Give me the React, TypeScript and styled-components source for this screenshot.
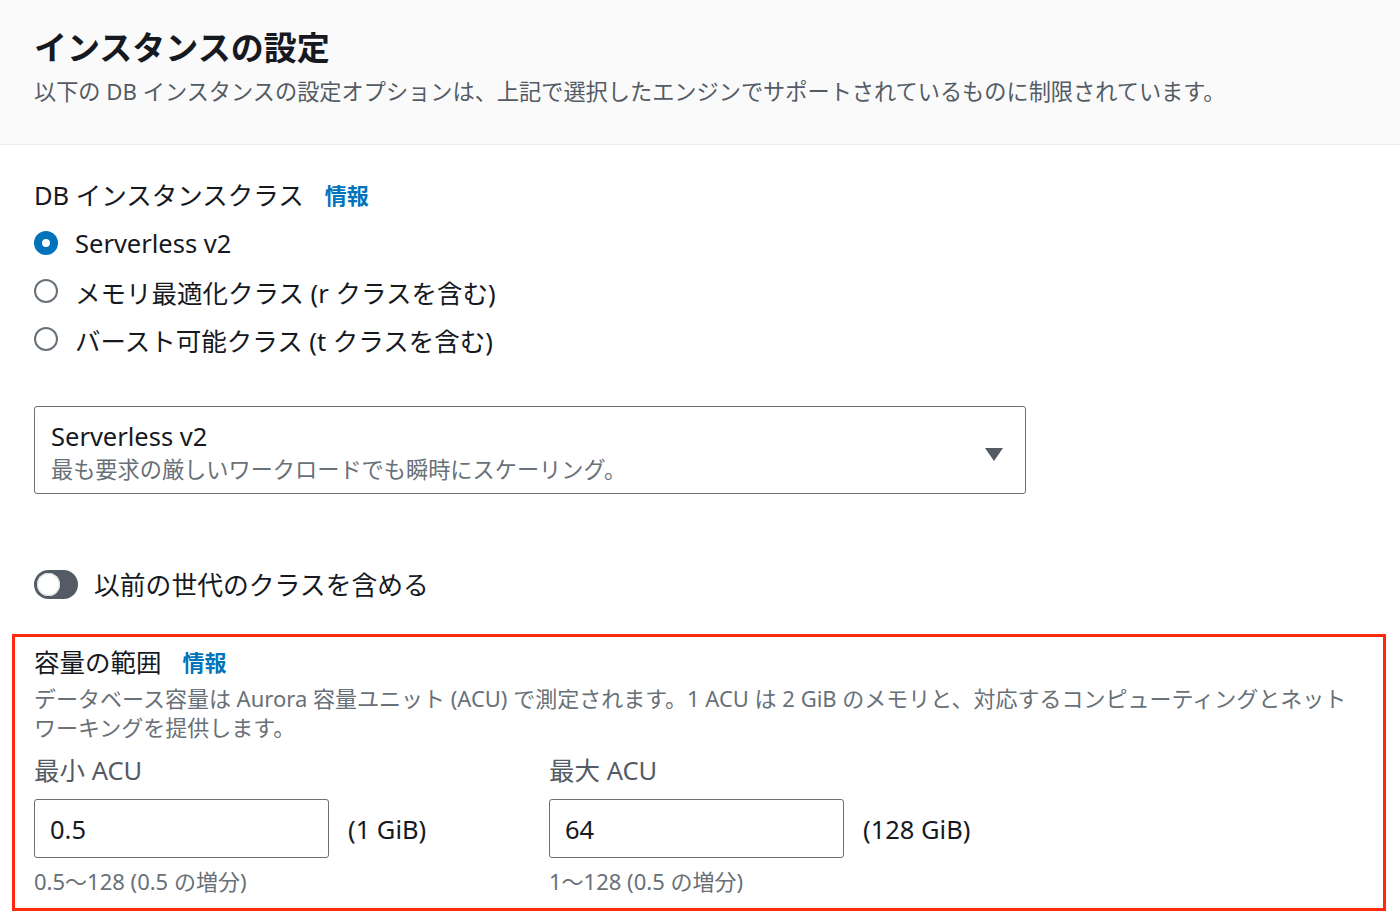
import React from 'react'
import styled, { createGlobalStyle } from 'styled-components'

const GlobalStyle = createGlobalStyle`
  body {
    margin: 0;
    background: #ffffff;
    color: #16191f;
    font-family: "Noto Sans", "Noto Sans CJK JP", sans-serif;
  }
`

const Page = styled.div`
  width: 1400px;
  min-height: 920px;
  background: #ffffff;
`

const Header = styled.header`
  background: #fafafa;
  border-bottom: 1px solid #eaeded;
  padding: 28px 34px 36px;
`

const Title = styled.h2`
  margin: 0;
  font-size: 33px;
  line-height: 40px;
  font-weight: 700;
  color: #16191f;
`

const Subtitle = styled.p`
  margin: 8px 0 0;
  font-size: 22.2px;
  line-height: 32px;
  color: #545b64;
`

const Body = styled.div`
  padding: 34px 0 0;
`

const Field = styled.div`
  padding: 0 34px;
`

const Label = styled.div<{ muted?: boolean }>`
  display: flex;
  align-items: center;
  gap: 21px;
  font-size: 25.5px;
  line-height: 32px;
  color: ${({ muted }) => (muted ? '#545b64' : '#16191f')};
`

const InfoLink = styled.a`
  color: #0073bb;
  font-weight: 700;
  font-size: 22px;
  text-decoration: none;
`

const RadioGroup = styled.div`
  margin-top: 8px;
  display: flex;
  flex-direction: column;
`

const RadioRow = styled.label`
  display: flex;
  align-items: center;
  gap: 17px;
  height: 48px;
  font-size: 25.5px;
  color: #16191f;
`

const RadioDot = styled.span<{ checked?: boolean }>`
  box-sizing: border-box;
  width: 24px;
  height: 24px;
  border-radius: 50%;
  border: ${({ checked }) => (checked ? '8px solid #0073bb' : '2px solid #687078')};
  background: #ffffff;
  flex-shrink: 0;
`

const Select = styled.div`
  margin-top: 43px;
  width: 992px;
  box-sizing: border-box;
  border: 1.5px solid #687078;
  border-radius: 3px;
  padding: 13px 22px 5px 16px;
  display: flex;
  align-items: center;
  justify-content: space-between;
`

const SelectText = styled.div`
  display: flex;
  flex-direction: column;
`

const SelectValue = styled.span`
  font-size: 25.5px;
  line-height: 32px;
  color: #16191f;
`

const SelectDesc = styled.span`
  font-size: 22.2px;
  line-height: 36px;
  color: #687078;
`

const Caret = styled.span`
  width: 0;
  height: 0;
  border-left: 9px solid transparent;
  border-right: 9px solid transparent;
  border-top: 13px solid #545b64;
`

const ToggleRow = styled.label`
  margin-top: 74px;
  display: flex;
  align-items: center;
  gap: 16px;
  height: 32px;
  font-size: 25.8px;
  color: #16191f;
`

const Track = styled.span`
  box-sizing: border-box;
  width: 44px;
  height: 29px;
  border-radius: 15px;
  background: #545b64;
  padding: 3px;
  display: flex;
  align-items: center;
`

const Knob = styled.span`
  width: 23px;
  height: 23px;
  border-radius: 50%;
  background: #ffffff;
  box-shadow: inset 0 0 0 1px #d5dbdb;
`

const Highlight = styled.section`
  margin: 34px 14px 0 12px;
  border: 3px solid #ff2a0c;
  padding: 9px 19px 13px;
`

const Description = styled.p`
  margin: 6px 0 0;
  font-size: 22px;
  line-height: 29px;
  color: #687078;
`

const Columns = styled.div`
  margin-top: 12px;
  display: grid;
  grid-template-columns: 515px 515px;
`

const Column = styled.div`
  display: flex;
  flex-direction: column;
`

const InputRow = styled.div`
  margin-top: 13px;
  display: flex;
  align-items: center;
  gap: 19px;
`

const Input = styled.div`
  box-sizing: border-box;
  width: 295px;
  height: 59px;
  border: 1.5px solid #687078;
  border-radius: 3px;
  padding: 0 15px;
  display: flex;
  align-items: center;
  font-size: 25.5px;
  color: #16191f;
`

const Suffix = styled.span`
  font-size: 25.5px;
  color: #16191f;
`

const Hint = styled.div`
  margin-top: 9px;
  font-size: 22px;
  line-height: 28px;
  color: #687078;
`

const classes = [
  { label: 'Serverless v2', checked: true },
  { label: 'メモリ最適化クラス (r クラスを含む)', checked: false },
  { label: 'バースト可能クラス (t クラスを含む)', checked: false }
]

const acu = [
  { label: '最小 ACU', value: '0.5', size: '(1 GiB)', hint: '0.5〜128 (0.5 の増分)' },
  { label: '最大 ACU', value: '64', size: '(128 GiB)', hint: '1〜128 (0.5 の増分)' }
]

export default function App() {
  return (
    <Page>
      <GlobalStyle />
      <Header>
        <Title>インスタンスの設定</Title>
        <Subtitle>
          以下の DB インスタンスの設定オプションは、上記で選択したエンジンでサポートされているものに制限されています。
        </Subtitle>
      </Header>
      <Body>
        <Field>
          <Label>
            DB インスタンスクラス
            <InfoLink>情報</InfoLink>
          </Label>
          <RadioGroup>
            {classes.map((c) => (
              <RadioRow key={c.label}>
                <RadioDot checked={c.checked} />
                {c.label}
              </RadioRow>
            ))}
          </RadioGroup>
          <Select>
            <SelectText>
              <SelectValue>Serverless v2</SelectValue>
              <SelectDesc>最も要求の厳しいワークロードでも瞬時にスケーリング。</SelectDesc>
            </SelectText>
            <Caret />
          </Select>
          <ToggleRow>
            <Track>
              <Knob />
            </Track>
            以前の世代のクラスを含める
          </ToggleRow>
        </Field>
        <Highlight>
          <Label>
            容量の範囲
            <InfoLink>情報</InfoLink>
          </Label>
          <Description>
            データベース容量は Aurora 容量ユニット (ACU) で測定されます。1 ACU は 2 GiB のメモリと、対応するコンピューティングとネットワーキングを提供します。
          </Description>
          <Columns>
            {acu.map((a) => (
              <Column key={a.label}>
                <Label muted>{a.label}</Label>
                <InputRow>
                  <Input>{a.value}</Input>
                  <Suffix>{a.size}</Suffix>
                </InputRow>
                <Hint>{a.hint}</Hint>
              </Column>
            ))}
          </Columns>
        </Highlight>
      </Body>
    </Page>
  )
}
